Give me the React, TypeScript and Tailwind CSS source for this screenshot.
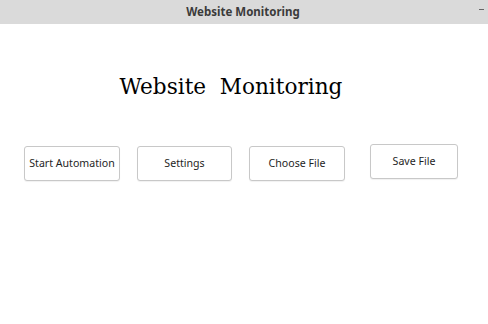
import React from "react";

const buttons = [
  { label: "Start Automation", cls: "ml-[24px] w-[96px] mt-[2px]" },
  { label: "Settings", cls: "ml-[17px] w-[95px] mt-[2px]" },
  { label: "Choose File", cls: "ml-[17px] w-[96px] mt-[2px]" },
  { label: "Save File", cls: "ml-[25px] w-[88px]" },
];

export default function App() {
  return (
    <div className="w-[488px] h-[324px] bg-white flex flex-col font-['Noto_Sans','Open_Sans',sans-serif]">
      <div className="h-6 bg-[#dadada] relative flex items-center justify-center shrink-0">
        <span className="text-[11.5px] font-bold text-[#3b3b3b] ml-[-2px]">Website Monitoring</span>
        <span className="absolute right-[4px] top-[9px] w-[5px] h-[1px] bg-[#666]" />
      </div>
      <div className="flex justify-center pt-[48px] pr-[26px]">
        <h1 className="text-[21.6px] leading-[30px] text-black font-['DejaVu_Serif','Liberation_Serif',serif] whitespace-pre">
          Website  Monitoring
        </h1>
      </div>
      <div className="flex items-start mt-[42px]">
        {buttons.map((b) => (
          <button
            key={b.label}
            className={`${b.cls} h-[35px] shrink-0 whitespace-nowrap px-0 rounded-[3px] border border-[#c8c8c8] bg-white text-[10.6px] text-[#1e1e1e] shadow-[0_1px_1px_rgba(0,0,0,0.06)]`}
          >
            {b.label}
          </button>
        ))}
      </div>
    </div>
  );
}
